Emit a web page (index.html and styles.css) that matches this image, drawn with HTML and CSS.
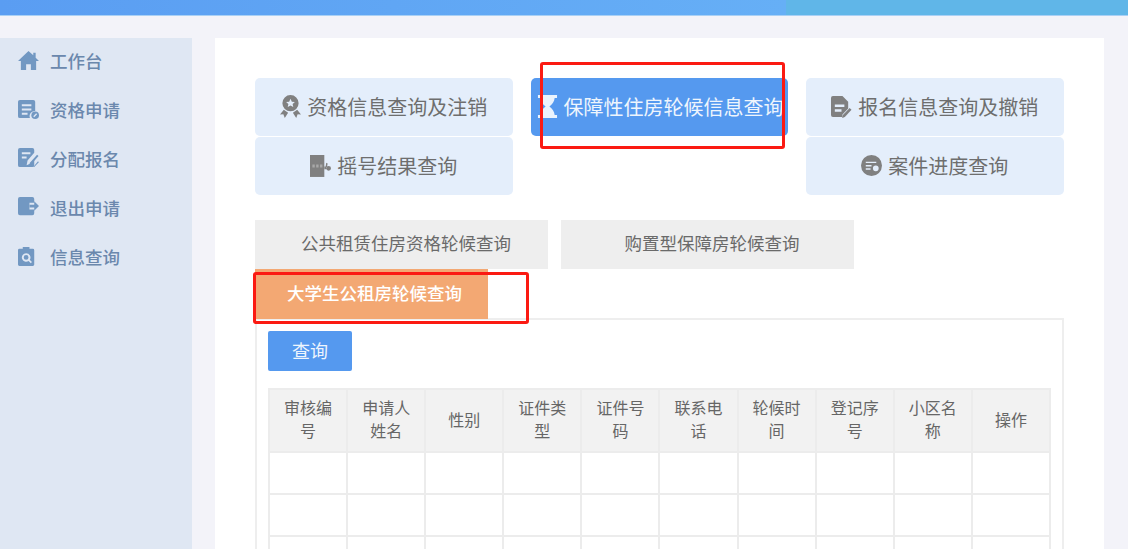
FILE: index.html
```html
<!DOCTYPE html>
<html lang="zh-CN">
<head>
<meta charset="utf-8">
<title>信息查询</title>
<link rel="stylesheet" href="styles.css">
</head>
<body>
<div class="page">
  <header class="topbar"><div class="topbar-left"></div><div class="topbar-right"></div></header>
  <div class="layout">
    <nav class="sidebar">
      <a class="nav-item"><svg class="nav-icon" viewBox="0 0 22 22"><path d="M11 1 0 11.500h3V21h5.500v-6h5v6H19v-9.500h3L18.500 8V3h-2.500v2.500z"/></svg>工作台</a>
      <a class="nav-item"><svg class="nav-icon" viewBox="0 0 22 22"><path fill-rule="evenodd" d="M2 1h14a2 2 0 0 1 2 2v9.500a5.500 5.500 0 0 0-5.500 7.500H2a2 2 0 0 1-2-2V3a2 2 0 0 1 2-2zm2 4.500v2h10v-2zm0 4.500v2h10v-2zm0 4.500v2h6v-2z"/><circle cx="18" cy="17" r="4"/><path d="m16 18 3-3 1 1-3 3z" fill="#dfe7f3"/></svg>资格申请</a>
      <a class="nav-item"><svg class="nav-icon" viewBox="0 0 22 22"><path fill-rule="evenodd" d="M2 0h13a2 2 0 0 1 2 2v3l-7 8-1 5 3.500-1.500L17 12v6a2 2 0 0 1-2 2H2a2 2 0 0 1-2-2V2a2 2 0 0 1 2-2zm2 4.500v2h9v-2zm0 4.500v2h5v-2z"/><path d="m20 7 1.500 1.500-8 9L12 16zM16 20l5-6 .8.800-4.800 5.200z"/></svg>分配报名</a>
      <a class="nav-item"><svg class="nav-icon" viewBox="0 0 22 22"><path d="M2 0h13a2 2 0 0 1 2 2v4h-5v7h5v4a2 2 0 0 1-2 2H2a2 2 0 0 1-2-2V2a2 2 0 0 1 2-2z"/><path d="M12 8h5V4.500l5 5-5 5V11h-5z"/></svg>退出申请</a>
      <a class="nav-item"><svg class="nav-icon" viewBox="0 0 22 22"><path fill-rule="evenodd" d="M1.500 3H5V1h7v2h3.500A1.500 1.500 0 0 1 17 4.500v15a1.500 1.500 0 0 1-1.500 1.500h-14A1.500 1.500 0 0 1 0 19.500v-15A1.500 1.500 0 0 1 1.500 3zM8.500 7.500a4.500 4.500 0 1 0 2.600 8.200l2.300 2.300 1.200-1.200-2.300-2.300A4.500 4.500 0 0 0 8.500 7.500zm0 2a2.500 2.500 0 1 1 0 5 2.500 2.500 0 0 1 0-5z"/></svg>信息查询</a>
    </nav>
    <main class="card">
      <section class="query-grid">
        <a class="query-btn"><svg class="query-icon" viewBox="0 0 22 24"><path fill-rule="evenodd" d="M11 0a8.500 8.500 0 1 1 0 17 8.500 8.500 0 0 1 0-17zm0 4-1.400 3-3.200.3 2.400 2.100-.7 3.100L11 11l2.900 1.500-.7-3.100 2.400-2.100-3.200-.3z"/><path d="M4 15.500 0 20.500l3.500-.3L5 24l3.500-5.500zM18 15.500l4 5-3.500-.3L17 24l-3.500-5.500z"/></svg>资格信息查询及注销</a>
        <a class="query-btn is-active"><svg class="query-icon" viewBox="0 0 22 24"><path d="M1 0h20v3h-2.500c-.3 4-2.500 6.500-5.500 9 3 2.500 5.200 5 5.500 9H21v3H1v-3h2.500c.3-4 2.500-6.500 5.500-9-3-2.500-5.200-5-5.500-9H1z"/></svg>保障性住房轮候信息查询</a>
        <a class="query-btn"><svg class="query-icon" viewBox="0 0 22 24"><path fill-rule="evenodd" d="M2 1h10l6 6v7l-6 6.500V23H2a2 2 0 0 1-2-2V3a2 2 0 0 1 2-2zm2 9v2.500h10V10zm0 5v2.500h7V15z"/><path d="m19.500 13.500 2 2-7 7.500-3 1 1-3z"/></svg>报名信息查询及撤销</a>
        <a class="query-btn"><svg class="query-icon" viewBox="0 0 22 24"><path d="M0 1h15v23H0z"/><path class="slots" d="M2.500 11h2.500v3H2.500zM6.500 11H9v3H6.500zM10.500 11H13v3h-2.500z"/><path d="M15 13h2v3h-2zM17 9l1.500 1-.7 3.500h-1.500zM19.500 12.500a2.500 2.500 0 1 1 0 5 2.500 2.500 0 0 1 0-5z"/></svg>摇号结果查询</a>
        <span class="query-gap"></span>
        <a class="query-btn"><svg class="query-icon" viewBox="0 0 22 24"><path fill-rule="evenodd" d="M11 1a11 11 0 1 1 0 22 11 11 0 0 1 0-22zM5 8v1.500h11V8zm0 3.500V13h6v-1.500zm0 3.500v1.500h5V15zm10.500-3a3 3 0 1 0 0 6 3 3 0 0 0 0-6z"/></svg>案件进度查询</a>
      </section>
      <section class="tabs">
        <a class="tab">公共租赁住房资格轮候查询</a>
        <a class="tab">购置型保障房轮候查询</a>
        <a class="tab is-current">大学生公租房轮候查询</a>
      </section>
      <section class="panel">
        <button class="search-btn" type="button">查询</button>
        <table class="result-table">
          <thead>
            <tr><th>审核编号</th><th>申请人姓名</th><th>性别</th><th>证件类型</th><th>证件号码</th><th>联系电话</th><th>轮候时间</th><th>登记序号</th><th>小区名称</th><th>操作</th></tr>
          </thead>
          <tbody>
            <tr><td></td><td></td><td></td><td></td><td></td><td></td><td></td><td></td><td></td><td></td></tr>
            <tr><td></td><td></td><td></td><td></td><td></td><td></td><td></td><td></td><td></td><td></td></tr>
            <tr><td></td><td></td><td></td><td></td><td></td><td></td><td></td><td></td><td></td><td></td></tr>
          </tbody>
        </table>
      </section>
    </main>
  </div>
  <div class="mark mark-query"></div>
  <div class="mark mark-tab"></div>
</div>
</body>
</html>
```
FILE: styles.css
```css
* { box-sizing: border-box; }
html, body { margin: 0; height: 100%; background: #fff; overflow: hidden; }
body { font-family: "Noto Sans CJK SC", "Noto Sans", sans-serif; }
.page { position: relative; width: 1128px; height: 549px; background: #f3f3f9; overflow: hidden; display: flex; flex-direction: column; }
.topbar { flex: none; height: 16px; display: flex; border-bottom: 1px solid #a9d0f5; }
.topbar-left { width: 786px; background: linear-gradient(90deg, #5a9df2 0%, #66aff6 100%); }
.topbar-right { flex: 1; background: #60b6e8; }
.layout { flex: 1; display: flex; gap: 23px; padding-top: 22px; min-height: 0; }
.sidebar { flex: none; width: 192px; background: #dfe7f3; display: flex; flex-direction: column; gap: 3px; }
.nav-item { height: 46px; display: flex; align-items: center; gap: 11px; padding-left: 18px; padding-bottom: 2px; color: #6b88ad; font-size: 17.5px; font-weight: 500; }
.nav-icon { flex: none; width: 21px; height: 21px; fill: #7298c2; }
.card { flex: none; width: 889px; background: #fff; padding: 40px 40px 0; overflow: hidden; }
.query-grid { display: grid; grid-template-columns: repeat(3, 257.5px); grid-auto-rows: 58px; column-gap: 18px; row-gap: 1px; margin-bottom: 25px; }
.query-btn { display: flex; align-items: center; justify-content: center; gap: 6px; padding-bottom: 2px; background: #e4eefb; border-radius: 5px; color: #6e6e6e; font-size: 20px; white-space: nowrap; }
.query-icon { flex: none; width: 21px; height: 23px; fill: #808080; }
.slots { fill: #a8a8a8; }
.query-btn.is-active { background: #5599ef; color: #eef5fd; justify-content: flex-start; padding-left: 6px; }
.query-btn.is-active .query-icon { fill: #eaf3fd; }
.tabs { display: flex; flex-wrap: wrap; column-gap: 13px; width: 620px; }
.tab { width: 293px; height: 49px; display: flex; align-items: center; justify-content: center; padding: 0 0 4px 9px; background: #eeeeee; color: #6a6a6a; font-size: 17.5px; }
.tab.is-current { width: 233px; height: 50px; padding-left: 6px; background: #f3a873; color: #fff; font-weight: 500; }
.panel { width: 809px; border: 2px solid #eeeeee; border-bottom: 0; margin-top: -1px; padding: 11px 11px 0; }
.search-btn { display: block; width: 84px; height: 40px; border: 0; border-radius: 2px; background: #5599ef; color: #eef5fd; font: inherit; font-size: 18px; padding: 0 0 2px; margin-bottom: 17px; }
.result-table { width: 783px; border-collapse: collapse; table-layout: fixed; }
.result-table th, .result-table td { border: 2px solid #ececec; padding: 0; }
.result-table th { height: 63px; padding: 0 11px 3px; background: #f2f2f2; color: #666; font-size: 16px; line-height: 23px; font-weight: 400; }
.result-table td { height: 42px; }
.mark { position: absolute; border: 3px solid #fb1a12; border-radius: 3px; }
.mark-query { left: 540px; top: 62px; width: 245px; height: 87px; }
.mark-tab { left: 253px; top: 272px; width: 276px; height: 52px; }
```
